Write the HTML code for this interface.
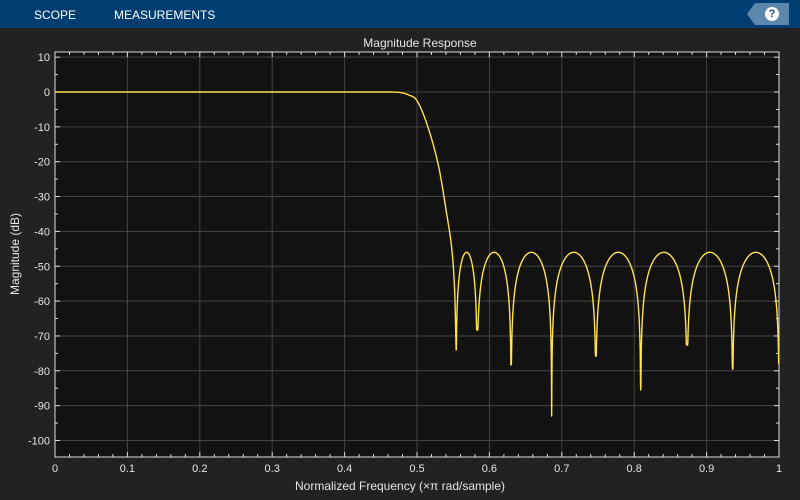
<!DOCTYPE html>
<html><head><style>
body{margin:0;width:800px;height:500px;background:#222;overflow:hidden;font-family:"Liberation Sans",sans-serif}
#hdr{position:absolute;left:0;top:0;width:800px;height:28px;background:#003e72}
#hdr span{position:absolute;top:8px;font-size:12px;color:#fff}
#help{position:absolute;left:755px;top:3px;width:34px;height:22px;background:#5b87ad}
#help:before{content:"";position:absolute;left:-8px;top:0;border-right:8px solid #5b87ad;border-top:11px solid transparent;border-bottom:11px solid transparent}
#help div{position:absolute;left:10px;top:4px;width:14px;height:14px;border-radius:7px;background:#fff;color:#1d4b78;font-size:11px;font-weight:bold;text-align:center;line-height:14px}
</style></head><body>
<div id="hdr"><span style="left:34px">SCOPE</span><span style="left:114px">MEASUREMENTS</span>
<div id="help"><div>?</div></div></div>
<svg id="s" width="800" height="500" style="position:absolute;left:0;top:0" font-family="Liberation Sans, sans-serif"></svg>
<script>
var s=document.getElementById('s'),h='';
var X0=55,X1=779,Y0=52,Y1=457;
function fx(f){return X0+f*(X1-X0)}
function fy(d){return 92-3.485*d}
h+='<text x="420" y="47" fill="#e6e6e6" font-size="12" text-anchor="middle">Magnitude Response</text>';
h+='<rect x="'+X0+'" y="'+Y0+'" width="'+(X1-X0)+'" height="'+(Y1-Y0)+'" fill="#121212"/>';
for(var i=1;i<10;i++){var x=fx(i/10);h+='<line x1="'+x+'" y1="'+Y0+'" x2="'+x+'" y2="'+Y1+'" stroke="#444"/>';}
for(var d=10;d>=-100;d-=10){var y=fy(d);h+='<line x1="'+X0+'" y1="'+y+'" x2="'+X1+'" y2="'+y+'" stroke="#444"/>';
h+='<line x1="'+X0+'" y1="'+y+'" x2="'+(X0+5)+'" y2="'+y+'" stroke="#ddd"/><line x1="'+X1+'" y1="'+y+'" x2="'+(X1-5)+'" y2="'+y+'" stroke="#ddd"/>';
h+='<text x="50" y="'+(y+4)+'" fill="#e6e6e6" font-size="11" text-anchor="end">'+(d<0?'-'+(-d):d)+'</text>';
var y2=fy(d-5);if(d>-105&&y2<Y1){h+='<line x1="'+X0+'" y1="'+y2+'" x2="'+(X0+3)+'" y2="'+y2+'" stroke="#ddd"/><line x1="'+X1+'" y1="'+y2+'" x2="'+(X1-3)+'" y2="'+y2+'" stroke="#ddd"/>';}}
for(var i=0;i<=50;i++){var x=fx(i/50),L=(i%5==0)?5:3;
h+='<line x1="'+x+'" y1="'+Y1+'" x2="'+x+'" y2="'+(Y1-L)+'" stroke="#ddd"/><line x1="'+x+'" y1="'+Y0+'" x2="'+x+'" y2="'+(Y0+L)+'" stroke="#ddd"/>';
if(i%5==0){var lb=i==0?'0':i==50?'1':(i/50).toFixed(1);h+='<text x="'+x+'" y="472" fill="#e6e6e6" font-size="11" text-anchor="middle">'+lb+'</text>';}}
h+='<rect x="'+X0+'" y="'+Y0+'" width="'+(X1-X0)+'" height="'+(Y1-Y0)+'" fill="none" stroke="#ddd"/>';
h+='<text x="400" y="490" fill="#e6e6e6" font-size="12" text-anchor="middle">Normalized Frequency (×π rad/sample)</text>';
h+='<text transform="translate(19,254) rotate(-90)" fill="#e6e6e6" font-size="12" text-anchor="middle">Magnitude (dB)</text>';
var nl=[0.554,0.583,0.630,0.686,0.747,0.809,0.873,0.936,1.0],dp=[-74,-68.3,-78.3,-93,-75.8,-85.5,-72.6,-79.5,-78];
var tp=[[0.455,0],[0.465,0],[0.478,-0.2],[0.488,-0.8],[0.5,-2.5],[0.515,-10],[0.530,-21.5],[0.541,-35],[0.548,-45],[0.552,-57],[0.554,-74],[0.556,-95]];
function trans(f){for(var j=1;j<tp.length-2;j++){if(f<=tp[j+1][0]){
 var x0=tp[j][0],x1=tp[j+1][0],y0=tp[j][1],y1=tp[j+1][1],dx=x1-x0;
 var m0=(tp[j+1][1]-tp[j-1][1])/(tp[j+1][0]-tp[j-1][0]),m1=(tp[j+2][1]-tp[j][1])/(tp[j+2][0]-tp[j][0]);
 var t=(f-x0)/dx,t2=t*t,t3=t2*t;
 return (2*t3-3*t2+1)*y0+(t3-2*t2+t)*dx*m0+(-2*t3+3*t2)*y1+(t3-t2)*dx*m1;}}return -74;}
function mag(f){
 if(f<0.465)return 0;
 if(f<=0.554)return Math.min(0,trans(f));
 for(var k=0;k<nl.length-1;k++){if(f<=nl[k+1]){var a=nl[k],b=nl[k+1];var sn=Math.abs(Math.sin(Math.PI*(f-a)/(b-a)));
  var lo=(f-a)<(b-f)?dp[k]:dp[k+1];var v=-46+20*Math.log10(Math.max(sn,1e-6));return Math.max(v,lo);}}
 return -78;}
var p='';for(var i=0;i<=4000;i++){var f=i/4000;p+=(i?'L':'M')+fx(f).toFixed(2)+' '+fy(mag(f)).toFixed(2);}
h+='<path d="'+p+'" fill="none" stroke="#ffe24d" stroke-width="1.4" stroke-linejoin="round"/>';
s.innerHTML=h;
</script>
</body></html>
